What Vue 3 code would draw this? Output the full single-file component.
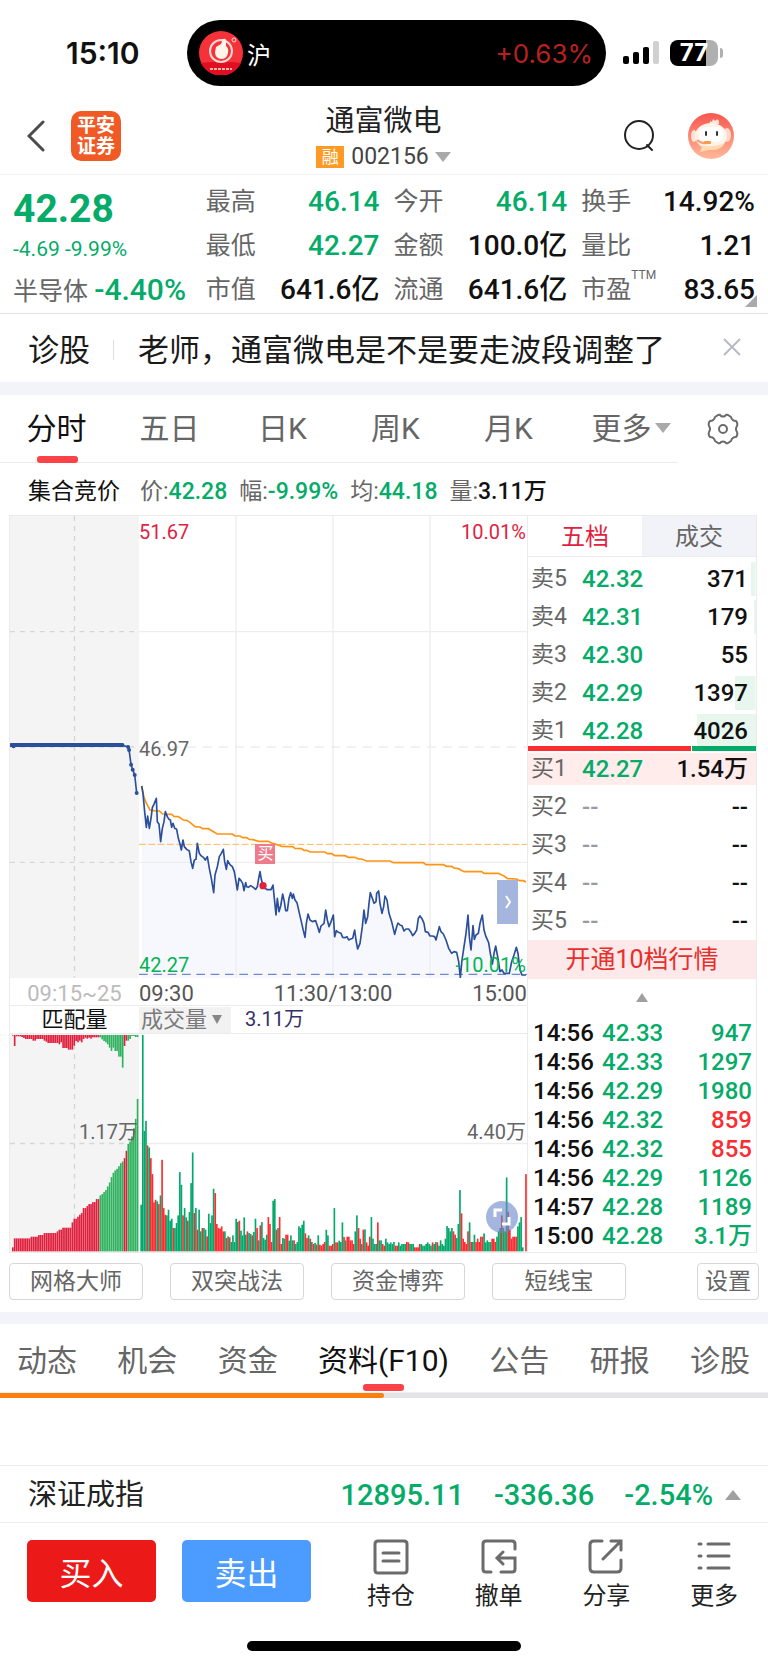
<template>
  <div class="page">
    <div class="status">
      <span class="clock">15:10</span>
      <div class="island">
        <svg class="island-logo" viewBox="0 0 44 44">
          <circle cx="22" cy="22" r="22" fill="#f5323a" />
          <path d="M2 32A22 22 0 0 0 42 32Q22 29 2 32Z" fill="#e00f22" />
          <circle cx="22" cy="20" r="11" fill="none" stroke="#ffd9d4" stroke-width="2" />
          <path d="M17 16L22 13L24 8Q28 7 27 12L27 15Q30 17 29 22Q28 28 22 28Q16 27 16 21Z" fill="#fff3ea" />
          <circle cx="35" cy="9" r="2" fill="none" stroke="#ffd9d4" />
          <path d="M11 38H33" stroke="#ffb5a8" stroke-width="2" stroke-dasharray="3 1" />
        </svg>
        <span class="island-name">沪</span>
        <span class="island-value">+0.63%</span>
      </div>
      <svg class="signal" viewBox="0 0 36 24">
        <rect x="0" y="15" width="6" height="8" rx="2" />
        <rect x="10" y="11" width="6" height="12" rx="2" />
        <rect x="20" y="6" width="6" height="17" rx="2" />
        <rect x="30" y="0" width="6" height="23" rx="2" fill="#d0d0d0" />
      </svg>
      <span class="battery">77</span>
    </div>

    <header class="header">
      <button class="icon-btn" aria-label="返回">
        <svg width="18" height="32" viewBox="0 0 18 32">
          <path d="M16 2L2 16L16 30" fill="none" stroke="#4a4a4a" stroke-width="3" stroke-linecap="round" />
        </svg>
      </button>
      <a class="brand" href="#">平安<br />证券</a>
      <div class="title">
        <h1>通富微电</h1>
        <p><span class="tag">融</span>002156<i class="tri down"></i></p>
      </div>
      <button class="icon-btn search" aria-label="搜索">
        <svg width="32" height="32" viewBox="0 0 32 32">
          <circle cx="16" cy="15" r="14" fill="none" stroke="#222" stroke-width="2" />
          <path d="M24 25L29 30" stroke="#222" stroke-width="2" stroke-linecap="round" />
        </svg>
      </button>
      <button class="icon-btn" aria-label="客服">
        <svg width="48" height="48" viewBox="0 0 48 48">
          <defs>
            <linearGradient id="av" x1="0" y1="0" x2="0" y2="1">
              <stop offset="0" stop-color="#f8564f" />
              <stop offset="1" stop-color="#ffb99a" />
            </linearGradient>
          </defs>
          <circle cx="24" cy="24" r="23" fill="url(#av)" />
          <path d="M23 12Q22 8 25 10Q26 5 28 9Q32 5 32 12Z" fill="#ffe7dc" />
          <ellipse cx="7" cy="24" rx="3" ry="6" fill="#ffe2d3" />
          <ellipse cx="40" cy="23" rx="4" ry="7" fill="#ffd9c6" />
          <ellipse cx="24" cy="24" rx="16" ry="13" fill="#fff3ea" />
          <path d="M9 30Q18 38 38 31Q34 39 22 38L13 40L15 34Z" fill="#ffdcb0" />
          <rect x="12" y="15" width="25" height="15" rx="7" fill="#fff" />
          <rect x="18" y="19" width="2" height="5" rx="1" fill="#333" />
          <rect x="29" y="19" width="2" height="5" rx="1" fill="#333" />
          <path d="M10 28Q14 32 20 31" fill="none" stroke="#f9a070" stroke-width="2" />
          <rect x="17" y="29" width="7" height="3" rx="1" fill="#ff9a4d" />
        </svg>
      </button>
    </header>

    <section class="quote">
      <strong class="price">42.28</strong>
      <div class="change">-4.69 -9.99%</div>
      <div class="sector">半导体 <b>-4.40%</b></div>
      <dl v-for="q in quotes" :key="q.name" :class="q.cls">
        <dt>{{ q.name }}<sup v-if="q.sup">{{ q.sup }}</sup></dt>
        <dd>{{ q.value }}</dd>
      </dl>
      <i class="corner"></i>
    </section>

    <section class="notice">
      <span>诊股</span>
      <a href="#">老师，通富微电是不是要走波段调整了</a>
      <button class="icon-btn" aria-label="关闭">
        <svg width="18" height="18" viewBox="0 0 18 18">
          <path d="M1 1L17 17M17 1L1 17" stroke="#b9bac8" stroke-width="2" />
        </svg>
      </button>
    </section>

    <div class="periods">
      <nav>
        <button v-for="(p, i) in periods" :key="p" :class="{ active: i === 0 }">
          {{ p }}<i v-if="p === '更多'" class="tri down"></i>
        </button>
      </nav>
      <button class="icon-btn gear" aria-label="图表设置">
        <svg width="32" height="32" viewBox="0 0 32 32" fill="none" stroke="#6b6b6b" stroke-width="2">
          <path d="M11 2Q13 1 14 3Q16 4 18 3Q19 1 21 2L24 4Q25 8 29 8Q31 10 30 13Q28 16 30 19Q31 22 29 24Q25 24 24 28L21 30Q19 31 18 29Q16 28 14 29Q13 31 11 30L8 28Q7 24 3 24Q1 22 2 19Q4 16 2 13Q1 10 3 8Q7 8 8 4Z" stroke-linejoin="round" />
          <circle cx="16" cy="16" r="4" />
        </svg>
      </button>
    </div>

    <div class="info">
      <span class="dark">集合竞价</span>
      <span>价:<b>42.28</b></span>
      <span>幅:<b>-9.99%</b></span>
      <span>均:<b>44.18</b></span>
      <span>量:<b class="dark">3.11万</b></span>
    </div>

    <div class="board">
      <div class="auction">
        <svg class="plot-price" viewBox="27 18 390 1386" preserveAspectRatio="none">
          <path class="dash" d="M222 18V1404M27 365H417M27 711H417M27 1057H417" />
          <path d="M31 705H367" stroke="#2b4f9b" stroke-width="12" stroke-linecap="round" />
          <path d="M367 707L384 710L387 720L393 764L398 779L404 795L410 849" fill="none" stroke="#2b4f9b" stroke-width="5" />
          <circle v-for="d in auctionDots" :key="d[1]" :cx="d[0]" :cy="d[1]" r="6" fill="#2b4f9b" />
        </svg>
        <div class="axis light">09:15~25</div>
        <div class="vol-head center">匹配量</div>
        <div class="vol-wrap">
          <svg class="plot-vol" viewBox="27 102 390 655" preserveAspectRatio="none">
            <path class="dash" d="M222 102V757M27 431H417" />
            <rect v-for="(b, i) in auctionBars" :key="i" :x="b.x" :y="b.y" width="5" :height="b.h" :fill="b.fill" />
          </svg>
          <span class="mark vol-left">1.17万</span>
        </div>
      </div>

      <div class="intraday">
        <div class="price-wrap">
          <svg class="plot-price" viewBox="27 -672 1164 1386" preserveAspectRatio="none">
            <polygon :points="areaPoints" fill="#f6f8fd" />
            <path class="grid" d="M318 -672V714M609 -672V714M900 -672V714M27 -325H1191M27 367H1191" />
            <path class="grid" d="M27 21H1191" stroke-dasharray="28 20" />
            <path d="M27 313H1191" stroke="#ffb84d" stroke-width="3" stroke-dasharray="20 8" />
            <path d="M27 703H1191" stroke="#7287c8" stroke-width="4" stroke-dasharray="26 17" />
            <polyline :points="averagePoints" fill="none" stroke="#ff9317" stroke-width="5" />
            <polyline :points="pricePoints" fill="none" stroke="#2b4f9b" stroke-width="5" stroke-linejoin="round" />
            <circle cx="399" cy="437" r="11" fill="#e3213f" />
          </svg>
          <span class="mark top red">51.67</span>
          <span class="mark top right red">10.01%</span>
          <span class="mark middle">46.97</span>
          <span class="mark bottom green">42.27</span>
          <span class="mark bottom right green">-10.01%</span>
          <span class="buy-flag">买</span>
          <button class="unfold" aria-label="展开">
            <svg width="8" height="16" viewBox="0 0 8 16">
              <path d="M2 2L6 8L2 14" fill="none" stroke="#fff" stroke-width="2" />
            </svg>
          </button>
        </div>
        <div class="axis"><span>09:30</span><span>11:30/13:00</span><span>15:00</span></div>
        <div class="vol-head">
          <label class="picker">
            <select aria-label="指标">
              <option>成交量</option>
            </select>
            <i class="tri down"></i>
          </label>
          <span class="vol-now">3.11万</span>
        </div>
        <div class="vol-wrap">
          <svg class="plot-vol" viewBox="417 102 1164 655" preserveAspectRatio="none">
            <path class="grid" d="M417 431H1581" />
            <rect v-for="(b, i) in volumeBars" :key="i" :x="b.x" :y="b.y" width="5" :height="b.h" :fill="b.fill" />
          </svg>
          <span class="mark vol-left">4.40万</span>
          <button class="zoom" aria-label="全屏">
            <svg width="32" height="32" viewBox="0 0 32 32">
              <path d="M9 16V9H16M16 23H23V16" fill="none" stroke="#fff" stroke-width="3" />
            </svg>
          </button>
        </div>
      </div>

      <aside class="book">
        <div class="book-tabs">
          <button class="active">五档</button>
          <button>成交</button>
        </div>
        <table class="levels">
          <tbody>
            <tr v-for="r in sells" :key="r.name" :style="{ '--depth': r.depth }">
              <th>{{ r.name }}</th>
              <td class="green">{{ r.price }}</td>
              <td class="num">{{ r.count }}</td>
            </tr>
          </tbody>
        </table>
        <div class="ratio"><i></i><i></i></div>
        <table class="levels">
          <tbody>
            <tr v-for="(r, i) in buys" :key="r.name" :class="{ best: i === 0 }">
              <th>{{ r.name }}</th>
              <td :class="i === 0 ? 'green' : 'none'">{{ r.price }}</td>
              <td class="num">{{ r.count }}</td>
            </tr>
          </tbody>
        </table>
        <button class="upgrade">开通10档行情</button>
        <div class="more-up"><i class="tri up"></i></div>
        <table class="ticks">
          <tbody>
            <tr v-for="(t, i) in ticks" :key="i">
              <td>{{ t[0] }}</td>
              <td class="green">{{ t[1] }}</td>
              <td :class="t[3] ? 'bright' : 'green'">{{ t[2] }}</td>
            </tr>
          </tbody>
        </table>
      </aside>
    </div>

    <div class="chips">
      <button v-for="c in chips" :key="c">{{ c }}</button>
      <button class="setup">设置</button>
    </div>

    <nav class="sections">
      <a v-for="s in sections" :key="s" href="#" :class="{ active: s === '资料(F10)' }">{{ s }}</a>
    </nav>
    <div class="progress"><i></i></div>
    <div class="blank"></div>

    <div class="index">
      <span class="index-name">深证成指</span>
      <span>12895.11</span>
      <span>-336.36</span>
      <span>-2.54%</span>
      <i class="tri up"></i>
    </div>

    <footer class="actions">
      <button class="trade buy">买入</button>
      <button class="trade sell">卖出</button>
      <button v-for="a in actions" :key="a.name" class="action">
        <svg width="36" height="36" viewBox="0 0 36 36" fill="none" stroke="#6b6b6b" stroke-width="3" stroke-linecap="round">
          <path :d="a.path" />
        </svg>
        {{ a.name }}
      </button>
    </footer>
    <div class="home"></div>
  </div>
</template>

<script setup>
const quotes = [
  { name: "最高", value: "46.14", cls: "green" },
  { name: "今开", value: "46.14", cls: "green" },
  { name: "换手", value: "14.92%" },
  { name: "最低", value: "42.27", cls: "green" },
  { name: "金额", value: "100.0亿" },
  { name: "量比", value: "1.21" },
  { name: "市值", value: "641.6亿" },
  { name: "流通", value: "641.6亿" },
  { name: "市盈", value: "83.65", sup: "TTM" },
];
const periods = ["分时", "五日", "日K", "周K", "月K", "更多"];
const chips = ["网格大师", "双突战法", "资金博弈", "短线宝"];
const sections = ["动态", "机会", "资金", "资料(F10)", "公告", "研报", "诊股"];

const sells = [
  { name: "卖5", price: "42.32", count: "371", depth: "2%" },
  { name: "卖4", price: "42.31", count: "179", depth: "1%" },
  { name: "卖3", price: "42.30", count: "55", depth: "0%" },
  { name: "卖2", price: "42.29", count: "1397", depth: "9%" },
  { name: "卖1", price: "42.28", count: "4026", depth: "26%" },
];
const buys = [
  { name: "买1", price: "42.27", count: "1.54万" },
  { name: "买2", price: "--", count: "--" },
  { name: "买3", price: "--", count: "--" },
  { name: "买4", price: "--", count: "--" },
  { name: "买5", price: "--", count: "--" },
];
// time, price, volume, bought
const ticks = [
  ["14:56", "42.33", "947"],
  ["14:56", "42.33", "1297"],
  ["14:56", "42.29", "1980"],
  ["14:56", "42.32", "859", true],
  ["14:56", "42.32", "855", true],
  ["14:56", "42.29", "1126"],
  ["14:57", "42.28", "1189"],
  ["15:00", "42.28", "3.1万"],
];

const actions = [
  { name: "持仓", path: "M5 2H31Q34 2 34 5V31Q34 34 31 34H5Q2 34 2 31V5Q2 2 5 2ZM10 14H26M10 22H26" },
  { name: "撤单", path: "M34 10V5Q34 2 31 2H5Q2 2 2 5V30Q2 33 5 33H10M20 33H31Q34 33 34 30V19H17M22 13L16 19L22 25" },
  { name: "分享", path: "M14 2H6Q2 2 2 6V29Q2 33 6 33H29Q33 33 33 29V21M15 20L33 2M23 2H33V11" },
  { name: "更多", path: "M3 5H5M12 5H33M3 17H5M12 17H33M3 29H5M12 29H33" },
];

const auctionDots = [[38, 709], [384, 711], [387, 720], [393, 764], [398, 779], [404, 795], [410, 849]];

const pricePoints =
  "35,138 39,160 44,215 49,262 53,228 58,265 63,235 67,203 73,190 79,175 82,245 87,252 92,305 97,265 102,245 106,215 112,230 117,238 121,240 125,262 129,250 134,265 140,268 145,295 150,312 154,330 159,300 163,320 170,328 178,333 183,365 188,385 193,360 198,358 202,310 208,340 213,347 220,352 226,360 232,350 238,385 244,415 251,458 255,405 262,380 268,350 274,340 280,328 284,365 289,388 293,362 300,374 307,380 313,395 318,425 322,450 327,415 333,422 338,430 342,452 347,428 350,440 355,442 362,437 370,442 377,448 382,440 386,415 390,395 394,418 399,437 405,445 412,449 423,449 429,435 433,475 438,525 442,475 447,515 452,498 458,462 463,485 467,512 472,512 477,475 482,458 487,475 490,462 495,480 501,488 507,515 514,545 520,572 525,592 529,550 534,522 540,540 547,545 557,542 563,560 568,577 573,558 582,550 587,510 592,540 597,560 602,548 610,525 614,590 619,572 625,577 633,580 638,592 645,593 651,590 656,600 662,597 668,595 674,570 678,600 683,627 690,610 697,560 702,510 707,550 713,530 717,490 721,458 727,475 732,490 738,485 740,460 746,453 750,490 756,520 761,500 765,468 771,480 777,520 785,545 794,583 800,560 804,549 810,555 816,557 822,573 828,567 836,567 842,575 848,587 854,580 860,570 865,535 870,528 877,538 882,550 886,575 894,577 900,588 907,588 914,590 918,600 923,580 928,560 933,575 940,582 948,600 956,625 965,640 972,635 980,637 986,665 991,712 996,660 1002,620 1008,580 1014,525 1018,590 1023,630 1029,557 1033,598 1038,585 1045,580 1050,550 1057,525 1062,570 1068,590 1076,608 1081,640 1087,672 1092,640 1097,618 1103,650 1110,695 1116,690 1122,700 1138,700 1145,665 1152,645 1159,622 1164,640 1170,690 1176,705 1188,705";
const areaPoints = `35,714 ${pricePoints} 1188,714`;
const averagePoints =
  "35,138 42,172 50,192 60,210 72,212 88,213 98,222 125,223 132,229 145,230 160,240 170,241 180,247 195,260 210,261 218,266 235,266 262,282 307,282 315,288 330,288 338,293 350,293 358,298 370,299 385,304 415,304 425,309 438,313 455,319 488,320 495,325 515,326 522,331 530,331 540,336 585,336 593,341 605,341 615,347 645,347 655,352 675,352 685,357 695,357 710,363 780,363 790,368 880,368 888,374 940,374 950,379 965,379 972,384 985,386 1002,395 1055,395 1062,400 1105,400 1115,405 1122,408 1133,416 1160,417 1168,422 1180,422 1188,426";

// one bar per minute, negative means an up (red) minute
const volumes = [
  140, 650, 362, 392, -318, 312, -280, -232, -147, -155, 150, -142, 168, -275, -130, -110, 108, 125, 92, 98,
  -70, 70, 85, 108, 238, 200, -108, 130, 102, -92, 118, 205, 297, -115, 130, -65, 125, 60, -70, 70,
  65, -45, 113, 85, 108, 188, -175, -82, -70, -68, -75, -60, 60, -40, 45, -42, 28, 48, 28, 98,
  88, -92, 62, 48, 102, 50, -60, 55, 52, -48, 58, 98, -70, 33, -78, 88, 40, 35, 50, -103,
  -82, -28, 152, 157, -65, 70, -103, -22, 40, 38, -50, -50, 32, 48, 33, -33, 22, 28, 75, 70,
  80, 92, -54, -40, 48, -38, 28, -22, 25, -20, 48, -20, -17, -22, -28, 65, 48, -17, -17, -22,
  130, -27, -27, 32, 28, 87, -43, 33, -44, -44, -33, -33, -22, 60, 108, -70, -38, 22, -65, 66,
  -27, -17, -44, 103, 38, 22, 22, -87, 33, 33, -22, -17, 38, 27, 22, 27, 22, 28, -17, -17,
  27, 17, 22, 22, 22, -28, -27, 22, 22, 22, -12, -12, -12, -22, 22, 17, 17, 22, 27, 22,
  17, -27, 22, 28, -27, 17, 33, 22, 17, 38, 76, 70, 60, 70, -60, -50, 40, 82, 184, -114,
  -38, -28, -22, -60, 87, -28, 28, 50, -28, -38, -28, -44, -44, 54, 27, 33, 28, 28, -38, -38,
  -28, 44, 60, 70, -108, 70, 60, 222, -119, -65, -38, -44, -44, -44, 75, 87, 103, 12, 0, -232,
];
const volumeBars = volumes.map((v, i) => ({
  x: 421 + i * 4.83,
  y: 755 - Math.abs(v),
  h: Math.abs(v),
  fill: v < 0 ? "#fb2d31" : "#05a86b",
}));

// call auction: matched volume from the bottom, unmatched from the top
const matched = [
  12, 39, 39, 39, 39, 39, 39, 39, 39, 39, 44, 44, 44, 44, 49, 49, 49, 55, 55, 55,
  55, 55, 55, 55, 60, 65, 65, 71, 71, 71, 71, 71, 87, 98, 98, 104, 110, 115, 130, 130,
  136, 142, 142, 148, 148, 157, 157, 168, 172, 178, 184, 195, 207, 223, 236, 243, 248, 256, 265, 270,
  280, 302, 323, 330, 345, 370, 398, 458,
];
const unmatched = [
  2, 33, 4, 4, 4, 6, 9, 12, 12, 12, 12, 17, 17, 12, 12, 12, 12, 17, 20, 24,
  24, 24, 24, 24, 24, 28, 22, 39, 39, 39, 44, 44, 44, 32, 18, 22, 17, 22, 12, 8,
  11, 8, 11, 7, 7, 7, 7, 7, 13, 18, 22, 28, 38, 48, 38, 48, 48, 65, 65, 98,
  33, 17, 17, 12, 3, 3, 6, 6,
];
const auctionFill = (i) => (i < 47 || i === 60 || i === 61 ? "#e01f3d" : "#2fb25e");
const auctionBars = [
  ...matched.map((h, i) => ({ x: 33 + i * 5.63, y: 755 - h, h, fill: auctionFill(i) })),
  ...unmatched.map((h, i) => ({ x: 33 + i * 5.63, y: 105, h, fill: auctionFill(i) })),
];
</script>

<style>
body {
  margin: 0;
  background: #fff;
}
</style>

<style scoped>
.page {
  font-family: Roboto, "Noto Sans CJK SC", sans-serif;
  color: #111;
  background: #fff;
}
button,
select {
  padding: 0;
  border: none;
  background: none;
  font: inherit;
  color: inherit;
}
a {
  color: inherit;
  text-decoration: none;
}
h1,
p,
dl,
dd {
  margin: 0;
}
b {
  font-weight: 500;
}
table {
  width: 100%;
  border-collapse: collapse;
}
td,
th {
  padding: 0;
}
svg {
  display: block;
}
.icon-btn {
  display: block;
}
.green {
  color: #05ab69;
}
.red {
  color: #e3213f;
}
.bright {
  color: #fb2d31;
}
.tri {
  display: inline-block;
  border: 8px solid transparent;
}
.tri.down {
  border-top: 10px solid #a9a9a9;
  border-bottom: none;
}
.tri.up {
  border-bottom: 10px solid #a0a0a0;
  border-top: none;
}

.status {
  display: flex;
  align-items: center;
  height: 66px;
  padding: 20px 50px 11px 66px;
  font-family: Inter, "Noto Sans CJK SC", sans-serif;
}
.clock {
  width: 121px;
  font-size: 30px;
  font-weight: 600;
}
.island {
  flex: 1;
  display: flex;
  align-items: center;
  height: 66px;
  box-sizing: border-box;
  padding: 0 13px 0 12px;
  border-radius: 33px;
  background: #000;
}
.island-logo {
  width: 44px;
  height: 44px;
}
.island-name {
  margin-left: 4px;
  font-size: 24px;
  color: #fff;
}
.island-value {
  margin-left: auto;
  font-size: 26px;
  color: #b8211f;
}
.signal {
  width: 36px;
  height: 24px;
  margin: 0 11px 0 17px;
}
.battery {
  position: relative;
  width: 48px;
  height: 26px;
  border-radius: 8px;
  background: linear-gradient(90deg, #000 75%, #b0b0b0 75%);
  color: #fff;
  font-size: 24px;
  font-weight: 700;
  line-height: 26px;
  text-align: center;
}
.battery::after {
  content: "";
  position: absolute;
  right: -5px;
  top: 8px;
  width: 3px;
  height: 10px;
  border-radius: 0 4px 4px 0;
  background: #b0b0b0;
}

.header {
  display: flex;
  align-items: center;
  height: 77px;
  padding: 0 33px 0 27px;
  border-bottom: 1px solid #f0f0f0;
}
.brand {
  width: 50px;
  height: 50px;
  margin-left: 26px;
  box-sizing: border-box;
  padding-top: 4px;
  border-radius: 10px;
  background: #f15a24;
  color: #fff;
  font-size: 19px;
  font-weight: 700;
  line-height: 21px;
  text-align: center;
}
.title {
  flex: 1;
  padding: 3px 0 0 23px;
  text-align: center;
}
.title h1 {
  font-size: 29px;
  font-weight: 400;
  line-height: 40px;
  color: #222;
}
.title p {
  display: flex;
  align-items: center;
  justify-content: center;
  font-size: 23px;
  line-height: 32px;
  color: #444;
}
.tag {
  width: 28px;
  margin-right: 7px;
  background: #ff9a27;
  color: #fff;
  font-size: 17px;
  line-height: 22px;
}
.title .tri {
  margin-left: 6px;
}
.search {
  margin-right: 32px;
}

.quote {
  position: relative;
  display: grid;
  grid-template-columns: 179fr 174fr 174fr 174fr;
  grid-template-rows: repeat(3, 44px);
  column-gap: 14px;
  padding: 5px 13px 1px 13px;
  border-bottom: 1px solid #e3e3ec;
  line-height: 44px;
  white-space: nowrap;
}
.price,
.change,
.sector {
  grid-column: 1;
}
.price {
  grid-row: 1;
  padding-top: 7px;
  font-size: 39px;
  font-weight: 700;
  color: #05ab69;
}
.change {
  grid-row: 2;
  padding-top: 3px;
  font-size: 21px;
  color: #05ab69;
}
.sector {
  grid-row: 3;
  font-size: 25px;
  color: #666;
}
.sector b {
  font-size: 30px;
  color: #05ab69;
}
.quote dl {
  display: flex;
  justify-content: space-between;
}
.quote dt {
  position: relative;
  font-size: 25px;
  color: #666;
}
.quote dd {
  font-size: 28px;
  font-weight: 500;
}
.quote sup {
  position: absolute;
  left: 50px;
  top: -15px;
  font-size: 12px;
}
.corner {
  position: absolute;
  right: 11px;
  bottom: 6px;
  border-left: 12px solid transparent;
  border-bottom: 12px solid #aaa;
}

.notice {
  display: flex;
  align-items: center;
  height: 66px;
  padding: 0 27px 2px 28px;
  border-bottom: 13px solid #f3f4f9;
  font-size: 31px;
  color: #1a1a1a;
}
.notice a {
  display: flex;
  align-items: center;
  margin-left: 23px;
}
.notice a::before {
  content: "";
  width: 1px;
  height: 20px;
  margin: 6px 24px 0 0;
  background: #dcdce2;
}
.notice button {
  margin-left: auto;
}

.periods {
  display: flex;
  align-items: center;
  height: 68px;
}
.periods nav {
  flex: 1;
  display: flex;
  height: 67px;
  border-bottom: 1px solid #ececec;
}
.periods nav button {
  position: relative;
  flex: 1;
  padding-bottom: 6px;
  font-size: 30px;
  color: #666;
}
.periods nav .active {
  color: #111;
}
.periods .active::after,
.sections .active::after {
  content: "";
  position: absolute;
  left: 50%;
  bottom: -1px;
  width: 41px;
  height: 7px;
  margin-left: -20px;
  border-radius: 3px;
  background: #fa4248;
}
.periods .tri {
  position: absolute;
  right: 7px;
  top: 28px;
}
.gear {
  margin: 0 29px;
}

.info {
  display: flex;
  gap: 12px;
  height: 52px;
  padding-left: 28px;
  font-size: 23px;
  line-height: 57px;
  color: #666;
}
.info .dark {
  color: #111;
}
.info > .dark {
  margin-right: 8px;
}
.info b {
  color: #05ab69;
}

.board {
  display: grid;
  grid-template-columns: 130fr 388fr 230fr;
  margin: 0 11px 0 9px;
  border-top: 1px solid #ebebeb;
  border-bottom: 1px solid #ebebeb;
}
.auction {
  border-left: 1px solid #ebebeb;
}
.plot-price {
  width: 100%;
  height: 462px;
}
.plot-vol {
  width: 100%;
  height: 218px;
}
.auction svg {
  background: #f4f4f4;
}
.dash {
  stroke: #d6d6d6;
  stroke-width: 4;
  stroke-dasharray: 15 15;
}
.grid {
  stroke: #ededed;
  stroke-width: 4;
}
.axis {
  display: flex;
  justify-content: space-between;
  height: 27px;
  border-bottom: 1px solid #ebebeb;
  font-size: 22px;
  line-height: 32px;
  color: #555;
}
.axis.light {
  justify-content: center;
  color: #bbb;
}
.vol-head {
  display: flex;
  align-items: center;
  height: 27px;
  border-bottom: 1px solid #ebebeb;
  font-size: 22px;
  line-height: 27px;
}
.vol-head.center {
  justify-content: center;
}
.picker {
  display: flex;
  align-items: center;
  width: 92px;
  height: 26px;
  background: #f2f2f2;
  color: #7a7a7a;
}
.picker select {
  appearance: none;
  margin-left: 2px;
  width: 71px;
  line-height: 26px;
}
.picker .tri {
  border-width: 9px 5px 0;
  border-top-color: #888;
}
.vol-now {
  margin-left: 14px;
  font-size: 20px;
  color: #35306a;
}
.price-wrap,
.vol-wrap {
  position: relative;
}
.mark {
  position: absolute;
  left: 0;
  font-size: 20px;
  line-height: 24px;
  color: #666;
}
.mark.red {
  color: #e3213f;
}
.mark.green {
  color: #05b355;
}
.mark.top {
  top: 4px;
}
.mark.middle {
  top: 221px;
}
.mark.bottom {
  bottom: 1px;
}
.mark.right,
.mark.vol-left {
  left: auto;
  right: 1px;
}
.mark.vol-left {
  top: 86px;
}
.buy-flag {
  position: absolute;
  left: 30%;
  top: 328px;
  width: 20px;
  height: 20px;
  background: #ee7b8c;
  color: #fff;
  font-size: 16px;
  line-height: 20px;
  text-align: center;
}
.unfold {
  position: absolute;
  right: 9px;
  top: 364px;
  display: flex;
  align-items: center;
  justify-content: center;
  width: 21px;
  height: 44px;
  background: #a6b5de;
}
.zoom {
  position: absolute;
  right: 9px;
  bottom: 19px;
  border-radius: 50%;
  background: rgba(104, 133, 203, 0.6);
}

.book {
  border-left: 1px solid #ebebeb;
  border-right: 1px solid #ebebeb;
}
.book-tabs {
  display: flex;
  height: 40px;
  margin-bottom: 3px;
  border-bottom: 1px solid #ebebeb;
}
.book-tabs button {
  flex: 1;
  padding-top: 2px;
  background: #f2f3f8;
  font-size: 24px;
  line-height: 38px;
  color: #666;
}
.book-tabs .active {
  background: #fff;
  color: #e3213f;
}
.levels tr {
  height: 38px;
  background: linear-gradient(#e8f7ee, #e8f7ee) right center / var(--depth, 0%) 34px no-repeat;
}
.levels tr.best {
  background: linear-gradient(#ffeceb, #ffeceb) center / 100% 32px no-repeat;
}
.levels th {
  width: 51px;
  padding-left: 3px;
  font-size: 23px;
  font-weight: 400;
  line-height: 38px;
  text-align: left;
  color: #666;
}
.levels td {
  font-size: 24px;
  font-weight: 500;
  line-height: 38px;
}
.levels .none {
  color: #999aa5;
}
.levels .num {
  padding-right: 8px;
  text-align: right;
}
.ratio {
  position: relative;
  display: flex;
  gap: 1px;
  height: 5px;
  margin: -4px 0 -1px;
}
.ratio i {
  flex: 164;
  background: #fb2d31;
}
.ratio i + i {
  flex: 64;
  background: #05ab69;
}
.upgrade {
  display: block;
  width: 100%;
  height: 39px;
  background: #fde9e9;
  font-size: 25px;
  line-height: 39px;
  color: #e6302c;
}
.more-up {
  height: 32px;
  padding-top: 8px;
  text-align: center;
}
.more-up .tri {
  border-width: 0 6px 9px;
}
.ticks td {
  height: 29px;
  font-size: 24px;
  font-weight: 500;
  line-height: 29px;
}
.ticks td:first-child {
  width: 69px;
  padding-left: 5px;
}
.ticks td:last-child {
  padding-right: 4px;
  text-align: right;
}

.chips {
  display: flex;
  gap: 27px;
  padding: 10px 9px 12px;
  border-bottom: 12px solid #f3f4f9;
}
.chips button {
  width: 134px;
  height: 37px;
  box-sizing: border-box;
  border: 1px solid #d6d6d6;
  border-radius: 4px;
  background: #fff;
  font-size: 23px;
  line-height: 34px;
  color: #666;
}
.chips .setup {
  width: 62px;
  margin-left: auto;
}

.sections {
  display: flex;
  justify-content: space-between;
  height: 68px;
  padding: 0 18px 0 17px;
  border-bottom: 1px solid #f0f0f0;
  font-size: 30px;
  line-height: 74px;
  color: #666;
}
.sections a {
  position: relative;
}
.sections .active {
  color: #111;
}
.sections .active::after {
  bottom: 1px;
}
.progress {
  height: 5px;
  background: #e4e4e7;
}
.progress i {
  display: block;
  width: 50%;
  height: 5px;
  border-radius: 0 3px 3px 0;
  background: #ff7f0e;
}
.blank {
  height: 67px;
}

.index {
  display: flex;
  align-items: center;
  gap: 30px;
  height: 54px;
  padding: 2px 27px 0 28px;
  border-top: 1px solid #ececec;
  border-bottom: 1px solid #ececec;
  font-size: 29px;
  font-weight: 500;
  line-height: 54px;
  color: #05ab69;
}
.index-name {
  margin-right: auto;
  font-weight: 400;
  color: #222;
}
.index .tri {
  margin-left: -18px;
}

.actions {
  display: flex;
  padding: 16px 0 0 27px;
}
.trade {
  width: 129px;
  height: 62px;
  margin: 1px 26px 0 0;
  border-radius: 5px;
  background: #ec1919;
  font-size: 32px;
  color: #fff;
}
.trade.sell {
  background: #4c9bff;
}
.action {
  flex: 1;
  display: flex;
  flex-direction: column;
  align-items: center;
  font-size: 24px;
  line-height: 42px;
  color: #222;
}
.home {
  width: 274px;
  height: 10px;
  margin: 24px auto 14px;
  border-radius: 5px;
  background: #000;
}
</style>
